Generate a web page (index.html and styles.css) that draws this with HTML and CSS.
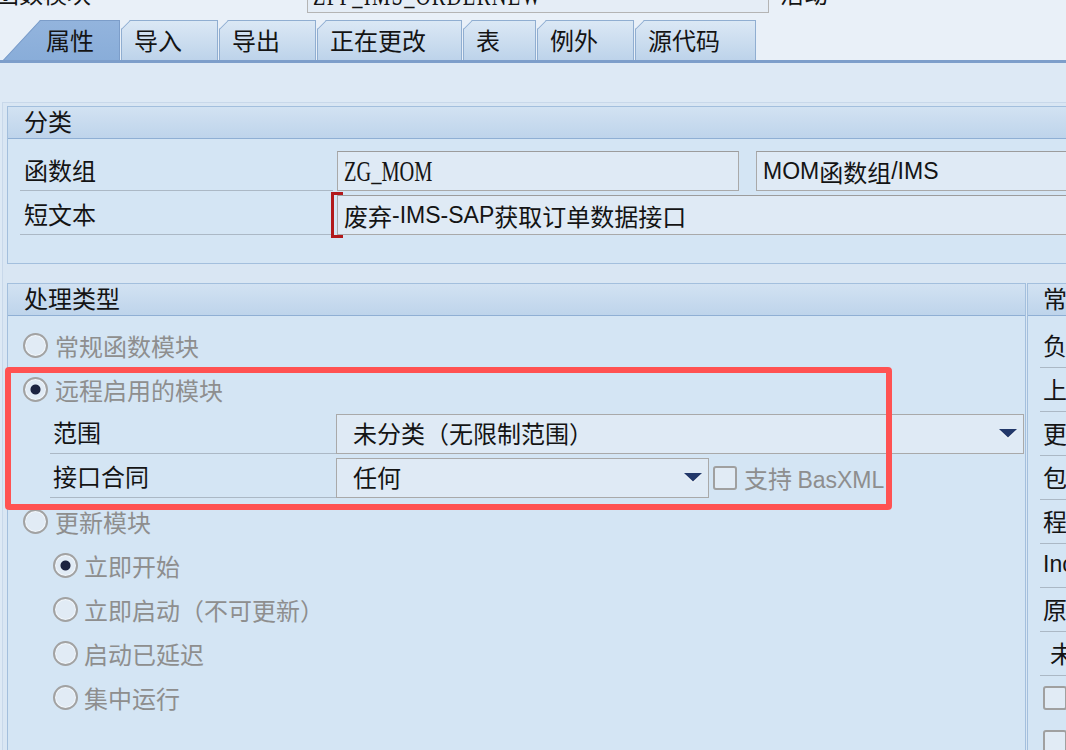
FILE: index.html
```html
<!DOCTYPE html>
<html lang="zh-CN">
<head>
<meta charset="utf-8">
<title>函数模块 属性</title>
<link rel="stylesheet" href="styles.css">
</head>
<body>
<div class="page">
  <div class="toprow">
    <div class="toplabel">函数模块</div>
    <div class="topfield"><span class="mono">ZFF_IMS_ORDERNEW</span></div>
    <div class="topstatus">活动</div>
  </div>

  <div class="tabs">
    <div class="tab active">属性</div>
    <div class="tab">导入</div>
    <div class="tab">导出</div>
    <div class="tab">正在更改</div>
    <div class="tab">表</div>
    <div class="tab">例外</div>
    <div class="tab">源代码</div>
  </div>

  <div class="content">
    <div class="frame">
      <div class="group g-class">
        <div class="ghead">分类</div>
        <div class="gbody gbody-class">
          <div class="frow">
            <div class="flabel">函数组</div>
            <div class="field f-group"><span class="mono">ZG_MOM</span></div>
            <div class="field f-groupdesc"><span class="lat">MOM</span>函数组<span class="lat">/IMS</span></div>
          </div>
          <div class="frow">
            <div class="flabel">短文本</div>
            <div class="field f-short required">废弃<span class="lat">-IMS-SAP</span>获取订单数据接口</div>
          </div>
        </div>
      </div>

      <div class="grow">
        <div class="group g-type">
          <div class="ghead">处理类型</div>
          <div class="gbody gbody-type">
            <div class="rrow"><span class="radio"></span>常规函数模块</div>
            <div class="rrow"><span class="radio on"></span>远程启用的模块</div>
            <div class="srow">
              <div class="slabel">范围</div>
              <div class="dd dd-wide"><span>未分类（无限制范围）</span><svg class="arrow" width="18" height="11" viewBox="0 0 18 11"><path d="M1 2H17L9 10Z" fill="#f4f8fc"/><path d="M0 0H18L9 8.5Z" fill="#22386a"/></svg></div>
            </div>
            <div class="srow">
              <div class="slabel">接口合同</div>
              <div class="dd dd-narrow"><span>任何</span><svg class="arrow" width="18" height="11" viewBox="0 0 18 11"><path d="M1 2H17L9 10Z" fill="#f4f8fc"/><path d="M0 0H18L9 8.5Z" fill="#22386a"/></svg></div>
              <span class="check"></span>
              <span class="checktext">支持 <span class="lat">BasXML</span></span>
            </div>
            <div class="rrow"><span class="radio"></span>更新模块</div>
            <div class="rrow sub"><span class="radio on"></span>立即开始</div>
            <div class="rrow sub"><span class="radio"></span>立即启动（不可更新）</div>
            <div class="rrow sub"><span class="radio"></span>启动已延迟</div>
            <div class="rrow sub"><span class="radio"></span>集中运行</div>
          </div>
        </div>
        <div class="group g-general">
          <div class="ghead">常规数据</div>
          <div class="gbody gbody-type">
            <div class="prow">负责人</div>
            <div class="prow">上次更改者</div>
            <div class="prow">更改日期</div>
            <div class="prow">包</div>
            <div class="prow">程序名称</div>
            <div class="prow"><span class="lat">Include</span></div>
            <div class="prow">原语言</div>
            <div class="prow indent">未</div>
            <div class="crow"><span class="check"></span></div>
            <div class="crow"><span class="check"></span></div>
          </div>
        </div>
      </div>
    </div>
  </div>

  <div class="highlight"></div>
</div>
</body>
</html>
```

FILE: styles.css
```css
html, body {
  margin: 0;
  padding: 0;
}
body {
  width: 1066px;
  height: 750px;
  overflow: hidden;
  background: #e9f0f8;
  font-family: "Noto Sans CJK SC", "Noto Sans", sans-serif;
  font-size: 24px;
  color: #141414;
}
.page {
  position: relative;
  width: 1066px;
  height: 750px;
  overflow: hidden;
}
.mono {
  display: inline-block;
  font-family: "Liberation Serif", "Noto Sans CJK SC", serif;
  font-size: 30px;
  transform: scaleX(0.68);
  transform-origin: 0 50%;
  white-space: nowrap;
}
.lat {
  font-family: "Liberation Sans", "Noto Sans CJK SC", sans-serif;
  font-size: 23px;
}

/* top row (scrolled partly out of view) */
.toprow {
  display: flex;
  align-items: flex-start;
  height: 44px;
  margin-top: -29px;
}
.toplabel {
  flex: none;
  margin-left: -5px;
  width: 312px;
  height: 42px;
  display: flex;
  align-items: center;
}
.topfield {
  flex: none;
  margin-top: 2px;
  width: 462px;
  height: 40px;
  box-sizing: border-box;
  border: 1px solid #b4b4b4;
  background: #e5edf6;
  display: flex;
  align-items: center;
  padding: 4px 0 0 5px;
  overflow: hidden;
}
.topfield .mono {
  letter-spacing: 2px;
}
.topstatus {
  flex: none;
  margin-left: 11px;
  height: 42px;
  display: flex;
  align-items: center;
}

/* tabs */
.tabs {
  display: flex;
  gap: 1px;
  margin-top: 5px;
  padding-left: 3px;
  height: 40px;
  border-bottom: 3px solid #7d9eca;
}
.tab {
  position: relative;
  flex: none;
  box-sizing: border-box;
  height: 40px;
  padding: 0 35px 2px 12px;
  display: flex;
  align-items: center;
  background: linear-gradient(#dbe8f5, #bdd3ea);
  border: 1px solid #90aed1;
  border-bottom: none;
  clip-path: polygon(9px 0, 100% 0, 100% 100%, 0 100%, 0 9px);
}
.tab::before {
  content: "";
  position: absolute;
  left: -1px;
  top: 8px;
  width: 13px;
  height: 1px;
  background: #90aed1;
  transform-origin: 0 0;
  transform: rotate(-45deg);
}
.tab.active {
  padding-left: 42px;
  padding-right: 25px;
  background: linear-gradient(#93b4dd, #89add9);
  border-color: #7c9dc9;
  clip-path: polygon(37px 0, 100% 0, 100% 100%, 0 100%);
}
.tab.active::before {
  top: 39px;
  width: 55px;
  background: #7c9dc9;
  transform: rotate(-47.2deg);
}

/* content */
.content {
  background: #dde9f5;
  padding-top: 39px;
  height: 700px;
}
.frame {
  margin-left: 2px;
  border-top: 1px solid #c8d8ea;
  border-left: 1px solid #c8d8ea;
  padding: 3px 0 0 4px;
  background: #d9e6f3;
  height: 700px;
}

.group {
  box-sizing: border-box;
  border: 1px solid #a3bfdd;
  background: #d4e5f4;
}
.ghead {
  box-sizing: border-box;
  height: 32px;
  border-bottom: 1px solid #8fafd4;
  background: linear-gradient(#d2e2f2, #bed4eb);
  padding: 0 0 4px 16px;
  display: flex;
  align-items: center;
  white-space: nowrap;
  overflow: hidden;
}
.g-class {
  width: 1100px;
}
.gbody-class {
  padding: 10px 0 26px;
}
.frow {
  display: flex;
  align-items: flex-start;
  height: 44px;
}
.flabel {
  flex: none;
  margin-left: 12px;
  width: 313px;
  height: 42px;
  box-sizing: border-box;
  border-bottom: 1px solid #abb8c5;
  padding-left: 4px;
  display: flex;
  align-items: center;
}
.field {
  position: relative;
  flex: none;
  margin-top: 2px;
  height: 40px;
  box-sizing: border-box;
  border: 1px solid #a9a9a9;
  border-top-color: #9c9c9c;
  background: #dfeaf5;
  display: flex;
  align-items: center;
  padding-left: 6px;
  white-space: nowrap;
}
.f-group {
  margin-left: 4px;
  width: 402px;
}
.f-groupdesc {
  margin-left: 17px;
  width: 400px;
}
.f-short {
  margin-left: 4px;
  width: 800px;
}
.required::before {
  content: "";
  position: absolute;
  left: -7px;
  top: -4px;
  width: 9px;
  height: 40px;
  border: 3px solid #b2191b;
  border-right: none;
}

/* processing type */
.grow {
  display: flex;
  gap: 1px;
  margin-top: 19px;
}
.g-type {
  width: 1019px;
  flex: none;
  height: 520px;
}
.g-general {
  width: 200px;
  flex: none;
  height: 520px;
}
.gbody-type {
  padding-top: 8px;
}
.rrow {
  box-sizing: border-box;
  height: 44px;
  display: flex;
  align-items: center;
  gap: 7px;
  padding: 0 0 2px 15px;
  color: #8e8e8e;
}
.rrow.sub {
  padding-left: 45px;
  gap: 6px;
}
.radio {
  width: 25px;
  height: 25px;
  flex: none;
  box-sizing: border-box;
  border-radius: 50%;
  border: 2px solid #a2a2a2;
  background: #e1ebf5;
  box-shadow: inset 0 0 0 1px #f3f7fb;
}
.radio.on {
  background: radial-gradient(circle, #1c2340 0 4.5px, #e1ebf5 5.5px);
}
.srow {
  display: flex;
  align-items: flex-start;
  height: 44px;
  padding-left: 42px;
}
.slabel {
  flex: none;
  width: 286px;
  height: 42px;
  box-sizing: border-box;
  border-bottom: 1px solid #abb8c5;
  padding: 0 0 3px 3px;
  display: flex;
  align-items: center;
}
.dd {
  flex: none;
  margin-top: 2px;
  height: 40px;
  box-sizing: border-box;
  border: 1px solid #a9a9a9;
  background: #dfeaf5;
  display: flex;
  align-items: center;
  justify-content: space-between;
  padding: 0 6px 3px 16px;
}
.dd-wide {
  width: 688px;
}
.dd-narrow {
  width: 373px;
}
.arrow {
  display: block;
  margin-top: 4px;
}
.check {
  width: 24px;
  height: 24px;
  flex: none;
  box-sizing: border-box;
  border: 2px solid #a0a0a0;
  border-radius: 3px;
  background: #e1ebf5;
}
.srow .check {
  align-self: center;
  margin-left: 4px;
}
.checktext {
  align-self: center;
  margin: 0 0 2px 7px;
  color: #8e8e8e;
  white-space: nowrap;
}
.checktext .lat {
  color: #8e8e8e;
}

/* general data */
.g-general .ghead {
  padding-left: 15px;
}
.prow {
  margin-left: 12px;
  height: 44px;
  box-sizing: border-box;
  border-bottom: 1px solid #abb8c5;
  padding: 0 0 3px 3px;
  display: flex;
  align-items: center;
  white-space: nowrap;
  overflow: hidden;
}
.prow.indent {
  padding-left: 10px;
}
.crow {
  height: 44px;
  padding-left: 15px;
  display: flex;
  align-items: center;
}

/* annotation overlay */
.highlight {
  position: absolute;
  left: 5px;
  top: 367px;
  width: 887px;
  height: 143px;
  box-sizing: border-box;
  border: 6px solid #ff5252;
  border-radius: 4px;
  pointer-events: none;
}
```
